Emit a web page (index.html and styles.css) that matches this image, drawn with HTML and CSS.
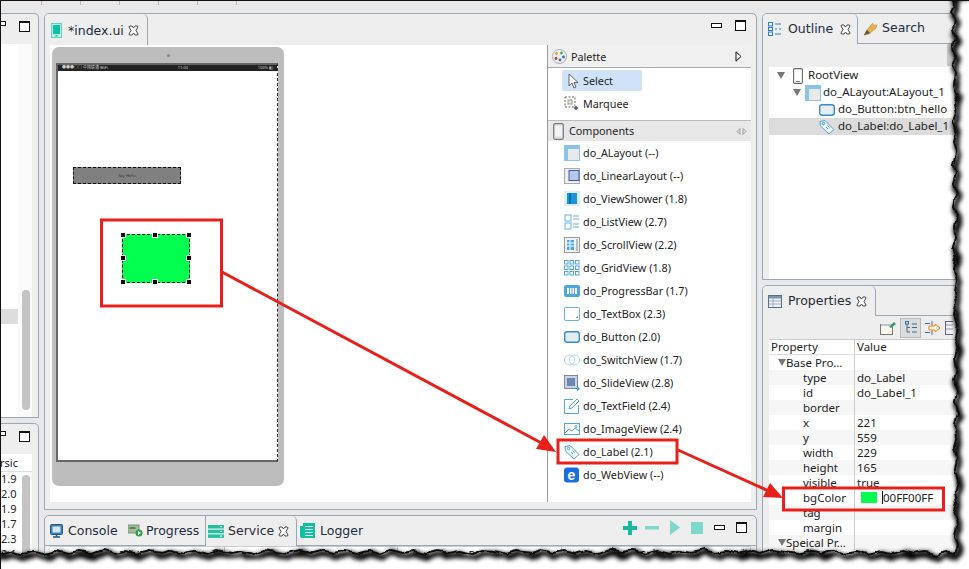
FILE: index.html
```html
<!DOCTYPE html>
<html lang="en">
<head>
  <meta charset="UTF-8">
  <title>index.ui</title>
  <link rel="stylesheet" href="styles.css">
</head>
<body>
<div class="shot">
  <div class="topstrip"><i></i><i></i><i></i><i></i><i></i><i></i></div>
  <div class="ide">

    <!-- left stub -->
    <div class="col">
      <section class="panel left-a">
        <div class="bar stub-bar"><span class="btn-min"></span><span class="btn-max"></span></div>
        <div class="left-body">
          <div class="left-white"><div class="left-sel"></div></div>
          <div class="left-gutter"><div class="left-thumb"></div></div>
        </div>
      </section>
      <section class="panel left-b">
        <div class="bar stub-bar"><span class="btn-min"></span><span class="btn-max"></span></div>
        <div class="left-table">
          <div class="left-head">rsic</div>
          <div class="left-rows">
            <div class="left-vals">
              <div>1.9</div><div>2.0</div><div>1.9</div><div>1.7</div><div>2.3</div><div>2.1</div>
            </div>
            <div class="left-thumb2"></div>
          </div>
        </div>
      </section>
    </div>

    <!-- center -->
    <div class="col">
      <section class="panel editor">
        <div class="bar editor-bar">
          <div class="tab tab-editor">
            <svg width="11" height="15" viewBox="0 0 11 15"><rect x=".5" y=".5" width="10" height="14" fill="#bfeee6" stroke="#62d0bf"/><rect x="2" y="2" width="7" height="9" fill="#0fbfa3"/><rect x="4.5" y="12" width="2" height="1.5" fill="#0fbfa3"/></svg>
            <span class="tab-title">*index.ui</span>
            <svg class="close" width="11" height="11" viewBox="0 0 11 11"><use href="#x-icon"/></svg>
          </div>
          <div class="bar-tools"><span class="btn-min"></span><span class="btn-max"></span></div>
        </div>
        <div class="editor-body">
          <div class="canvas">
            <div class="phone">
              <div class="phone-cam"></div>
              <div class="screen">
                <div class="statusbar"><span>●●●○○ 中国联通 WiFi</span><span>11:00</span><span>100% ▮▯</span></div>
                <div class="say-hello">Say Hello</div>
                <div class="green-box">
                  <b class="h h1"></b><b class="h h2"></b><b class="h h3"></b><b class="h h4"></b>
                  <b class="h h5"></b><b class="h h6"></b><b class="h h7"></b><b class="h h8"></b>
                </div>
              </div>
            </div>
          </div>
          <aside class="palette">
            <div class="pal-head">
              <svg width="15" height="15" viewBox="0 0 15 15"><circle cx="7.5" cy="7.5" r="7" fill="#eef0f4" stroke="#aab"/><circle cx="4.5" cy="4.5" r="1.4" fill="#e9a020"/><circle cx="9.5" cy="4" r="1.4" fill="#3bb54a"/><circle cx="11.5" cy="8" r="1.4" fill="#2f6fd0"/><circle cx="8" cy="11" r="1.4" fill="#2f6fd0"/><circle cx="4" cy="9.5" r="1.4" fill="#d8352a"/></svg>
              <span>Palette</span>
              <svg class="pal-arrow" width="7" height="11" viewBox="0 0 7 11"><path d="M1 .8 6 5.5 1 10.2Z" fill="#fff" stroke="#111"/></svg>
            </div>
            <div class="pal-tools">
              <div class="tool selected">
                <svg width="16" height="16" viewBox="-4 0 16 16"><path d="M1 1v12l3-3 2 5 2-1-2-4.500h4Z" fill="#f6f6f2" stroke="#555" stroke-width=".9"/></svg>
                <span>Select</span>
              </div>
              <div class="tool">
                <svg width="16" height="16" viewBox="0 0 16 16"><rect x="1" y="1" width="10" height="10" fill="none" stroke="#667" stroke-dasharray="2 1.500"/><rect x="4" y="4" width="4" height="4" fill="#f2ead2" stroke="#998"/><path d="M12 10v4M10 12h4" stroke="#222"/></svg>
                <span>Marquee</span>
              </div>
            </div>
            <div class="comp-head">
              <svg width="11" height="17" viewBox="0 0 11 17"><rect x=".7" y=".7" width="9.600" height="15.600" rx="1.500" fill="#e4e4e4" stroke="#777" stroke-width="1.200"/><rect x="2" y="3" width="7" height="10" fill="#f3f3f3"/></svg>
              <span>Components</span>
              <svg class="comp-arrows" width="11" height="7" viewBox="0 0 11 7"><path d="M4 .5 1 3.500 4 6.500ZM7 .5l3 3-3 3Z" fill="#ddd" stroke="#888" stroke-width=".7"/></svg>
            </div>
            <ul class="comp-list">
              <li><svg viewBox="0 0 16 16"><rect width="16" height="16" fill="#8cc4e6"/><rect x="4" y="4" width="11" height="11" fill="#e9e9e9"/></svg><span>do_ALayout (--)</span></li>
              <li><svg viewBox="0 0 16 16"><rect x=".5" y=".5" width="15" height="15" fill="#eee" stroke="#aaa"/><rect x="5" y="2.500" width="10" height="10" fill="#b8c8ea" stroke="#3a5cae"/></svg><span>do_LinearLayout (--)</span></li>
              <li><svg viewBox="0 0 16 16"><rect width="16" height="15" fill="#d8eefa"/><rect x="3" y="2" width="10" height="11" fill="#1b95d8"/><rect x="5" y="2" width="2" height="11" fill="#0d6fb5"/></svg><span>do_ViewShower (1.8)</span></li>
              <li><svg viewBox="0 0 16 16" fill="none" stroke="#63b5e5"><rect x="1" y="1" width="6" height="6"/><rect x="1" y="9" width="6" height="6"/><path d="M9 2h6M9 5h6M9 10h6M9 13h6"/></svg><span>do_ListView (2.7)</span></li>
              <li><svg viewBox="0 0 16 16"><rect x=".5" y=".5" width="15" height="15" fill="#eef5fa" stroke="#999"/><path d="M3 3h7v10H3Z" fill="#4fa6dc"/><path d="M3 6h7M3 9h7M6 3v10" stroke="#fff"/><rect x="12" y="2" width="2" height="12" fill="#bbb"/></svg><span>do_ScrollView (2.2)</span></li>
              <li><svg viewBox="0 0 16 16" fill="none" stroke="#4fa6dc"><rect x=".5" y=".5" width="3.500" height="3.500"/><rect x="6" y=".5" width="3.500" height="3.500"/><rect x="11.500" y=".5" width="3.500" height="3.500"/><rect x=".5" y="6" width="3.500" height="3.500"/><rect x="6" y="6" width="3.500" height="3.500"/><rect x="11.500" y="6" width="3.500" height="3.500"/><rect x=".5" y="11.500" width="3.500" height="3.500"/><rect x="6" y="11.500" width="3.500" height="3.500"/><rect x="11.500" y="11.500" width="3.500" height="3.500"/></svg><span>do_GridView (1.8)</span></li>
              <li><svg viewBox="0 0 16 16"><rect y="2" width="16" height="12" rx="2" fill="#4fa6dc"/><rect x="3" y="5" width="10" height="6" fill="#fff"/><path d="M5.500 5v6M8 5v6M10.500 5v6" stroke="#4fa6dc"/></svg><span>do_ProgressBar (1.7)</span></li>
              <li><svg viewBox="0 0 16 16"><rect x=".5" y="1.500" width="15" height="13" rx="1.500" fill="#fff" stroke="#63b5e5"/><path d="M12 12l2-2v2Z" fill="#777"/></svg><span>do_TextBox (2.3)</span></li>
              <li><svg viewBox="0 0 16 16"><rect x=".7" y="2.700" width="14.600" height="10.600" rx="2.500" fill="#e7edf2" stroke="#2f8fd0" stroke-width="1.400"/></svg><span>do_Button (2.0)</span></li>
              <li><svg viewBox="0 0 16 16" fill="none" stroke="#a8d6f0"><circle cx="5.500" cy="8" r="5"/><circle cx="10.500" cy="8" r="5"/></svg><span>do_SwitchView (1.7)</span></li>
              <li><svg viewBox="0 0 16 16"><rect x=".5" y=".5" width="13" height="13" fill="#c6d4e4" stroke="#889"/><rect x="3" y="3" width="8" height="8" fill="#6d87b5"/><path d="M8 13h5v-2l3 3-3 2v-2H8Z" fill="#3b98d8"/></svg><span>do_SlideView (2.8)</span></li>
              <li><svg viewBox="0 0 16 16" fill="none" stroke="#4fa6dc"><path d="M9 1.500H.5v14h14V7"/><path d="M5 11l1-3 7-7 2 2-7 7Z" fill="#fff"/></svg><span>do_TextField (2.4)</span></li>
              <li><svg viewBox="0 0 16 16" fill="none" stroke="#4fa6dc"><rect x=".5" y="2.500" width="15" height="11"/><path d="M1 12l4-4 3 2 3-3 4 3"/><circle cx="12" cy="5.500" r="1"/></svg><span>do_ImageView (2.4)</span></li>
              <li><svg viewBox="0 0 16 16" fill="none" stroke="#4fa6dc"><path d="M1 2.500 6 1.500 15 10.500 10 15 1.500 7Z" fill="#eef7fc"/><circle cx="4.500" cy="4.500" r="1.200"/><path d="M7 8l2 2M8.500 6.500l2 2"/></svg><span>do_Label (2.1)</span></li>
              <li><svg viewBox="0 0 16 16"><rect width="15" height="15" y=".5" rx="3" fill="#1a6fe0"/><text class="ie" x="7.500" y="12.500">e</text></svg><span>do_WebView (--)</span></li>
            </ul>
          </aside>
        </div>
      </section>

      <section class="panel bottom">
        <div class="bar bottom-bar">
          <div class="plain-tab">
            <svg width="13" height="14" viewBox="0 0 13 14"><rect x=".5" y=".5" width="12" height="10" rx="1" fill="#3d7fb5" stroke="#1e5a8c"/><rect x="2.500" y="2.500" width="8" height="6" fill="#d7e6f2"/><path d="M3 13h7M6.500 11v2" stroke="#1e5a8c" stroke-width="1.500"/></svg>
            <span>Console</span>
          </div>
          <div class="plain-tab">
            <svg width="15" height="13" viewBox="0 0 15 13"><rect y="1" width="11" height="8" fill="#a8b8a0" stroke="#7f8f7a"/><rect x="1.500" y="3" width="6" height="2" fill="#3f9a4a"/><circle cx="11" cy="9" r="3.500" fill="#2f9e44"/><path d="M10 7l3 2-3 2Z" fill="#fff"/></svg>
            <span>Progress</span>
          </div>
          <div class="tab tab-service">
            <svg width="16" height="13" viewBox="0 0 16 13"><rect width="16" height="3.500" fill="#27c0a3"/><rect y="4.700" width="16" height="3.500" fill="#27c0a3"/><rect y="9.400" width="16" height="3.500" fill="#27c0a3"/><path d="M12 1.700h2M12 6.400h2M12 11.100h2" stroke="#fff"/></svg>
            <span class="tab-title">Service</span>
            <svg class="close" width="11" height="11" viewBox="0 0 11 11"><use href="#x-icon"/></svg>
          </div>
          <div class="plain-tab">
            <svg width="15" height="15" viewBox="0 0 15 15"><path d="M3 0h12v15H2q-2 0-2-2V3h3Z" fill="#12bfa0"/><path d="M5 3.500h8M5 6.500h8M5 9.500h8M5 12.500h8" stroke="#e4f8f3"/></svg>
            <span>Logger</span>
          </div>
          <div class="bar-tools run-tools">
            <svg class="run-plus" width="14" height="14" viewBox="0 0 14 14"><path d="M5 0h4v5h5v4H9v5H5V9H0V5h5Z" fill="#17b89d"/></svg>
            <svg width="14" height="14" viewBox="0 0 14 14"><rect y="5" width="14" height="3.500" fill="#7dd9cb"/></svg>
            <svg class="run-play" width="11" height="15" viewBox="0 0 11 15"><path d="M0 0 10 7.500 0 15Z" fill="#7dd9cb"/></svg>
            <svg width="12" height="12" viewBox="0 0 12 12"><rect width="12" height="12" fill="#7dd9cb"/></svg>
            <span class="btn-min"></span><span class="btn-max"></span>
          </div>
        </div>
        <div class="service-table">
          <span>Project</span><span>IP</span><span>Port</span><span>Status</span>
        </div>
      </section>
    </div>

    <!-- right -->
    <div class="col">
      <section class="panel outline">
        <div class="bar right-bar">
          <div class="tab tab-outline">
            <svg width="14" height="14" viewBox="0 0 14 14" fill="none" stroke="#2f7fc0"><rect x=".5" y=".5" width="4" height="3.500"/><rect x=".5" y="5.500" width="4" height="3"/><rect x=".5" y="10" width="4" height="3.500"/><path d="M7 2h6M7 7h2M11 7h2M7 12h6"/></svg>
            <span class="tab-title">Outline</span>
            <svg class="close" width="11" height="11" viewBox="0 0 11 11"><use href="#x-icon"/></svg>
          </div>
          <div class="plain-tab search-tab">
            <svg width="16" height="15" viewBox="0 0 16 15"><path d="M1 14 4 9l6-7 4 1-1 4-7 6Z" fill="#e9b04e" stroke="#b5802b" stroke-width=".6"/><path d="M1 14 4 9l3 3Z" fill="#555"/><path d="M10 2l4 1" stroke="#eee" stroke-width="2"/></svg>
            <span>Search</span>
          </div>
        </div>
        <div class="outline-tools"><span class="scroll-stub"></span></div>
        <div class="tree">
          <div class="node lv0">
            <i class="twist"></i>
            <svg width="10" height="16" viewBox="0 0 10 16"><rect x=".6" y=".6" width="8.800" height="14.800" rx="1.200" fill="#fff" stroke="#666" stroke-width="1.100"/><rect x="3" y="13" width="4" height="1" fill="#888"/></svg>
            <span>RootView</span>
          </div>
          <div class="node lv1">
            <i class="twist"></i>
            <svg width="16" height="16" viewBox="0 0 16 16"><rect width="16" height="16" fill="#8cc4e6"/><rect x="4" y="4" width="11" height="11" fill="#e9e9e9"/></svg>
            <span>do_ALayout:ALayout_1</span>
          </div>
          <div class="node lv2">
            <svg width="16" height="16" viewBox="0 0 16 16"><rect x=".7" y="2.700" width="14.600" height="10.600" rx="2.500" fill="#e7edf2" stroke="#2f8fd0" stroke-width="1.400"/></svg>
            <span>do_Button:btn_hello</span>
          </div>
          <div class="node lv2 node-sel">
            <svg width="16" height="16" viewBox="0 0 16 16" fill="none" stroke="#4fa6dc"><path d="M1 2.500 6 1.500 15 10.500 10 15 1.500 7Z" fill="#eef7fc"/><circle cx="4.500" cy="4.500" r="1.200"/><path d="M7 8l2 2M8.500 6.500l2 2"/></svg>
            <span>do_Label:do_Label_1</span>
          </div>
        </div>
      </section>

      <section class="panel props">
        <div class="bar right-bar props-bar">
          <div class="tab tab-props">
            <svg width="14" height="13" viewBox="0 0 14 13"><rect x=".5" y=".5" width="13" height="12" fill="#eef2f6" stroke="#5a6f85"/><rect x="1" y="1" width="12" height="2.500" fill="#7f95ab"/><path d="M1 6h12M1 9h12M5 3v9" stroke="#9fb0c0"/></svg>
            <span class="tab-title">Properties</span>
            <svg class="close" width="11" height="11" viewBox="0 0 11 11"><use href="#x-icon"/></svg>
          </div>
        </div>
        <div class="props-tools">
          <svg width="16" height="14" viewBox="0 0 16 14"><rect x=".5" y="3.500" width="12" height="10" fill="#fdf8ec" stroke="#777"/><rect x="1" y="3" width="12" height="2" fill="#b9c4cf"/><path d="M9 6l5-5 2 2-5 4Z" fill="#2f9e6a"/></svg>
          <span class="tool-on"><svg width="12" height="13" viewBox="0 0 12 13" fill="none" stroke="#3a6f9a"><rect x=".5" y=".5" width="3" height="2.500"/><path d="M2 3v8h3M2 6.500h3M7 3h5M7 6.500h5M7 11h5"/></svg></span>
          <svg width="16" height="14" viewBox="0 0 16 14"><path d="M0 2.500h5M0 11.500h5M7 0v5M7 9v5" stroke="#3a6f9a"/><path d="M4 5h6V3l5 4-5 4V9H4Z" fill="#fdf3df" stroke="#e08a1e"/></svg>
          <svg width="8" height="14" viewBox="0 0 8 14"><rect x=".5" y=".5" width="12" height="13" fill="#eef2f6" stroke="#667"/><path d="M1 4h7M1 8h7" stroke="#99a"/></svg>
        </div>
        <div class="prop-table">
          <div class="prop-row prop-head"><span>Property</span><span>Value</span></div>
          <div class="prop-row group"><span><i class="twist"></i>Base Pro…</span><span></span></div>
          <div class="prop-row alt"><span>type</span><span>do_Label</span></div>
          <div class="prop-row"><span>id</span><span>do_Label_1</span></div>
          <div class="prop-row alt"><span>border</span><span></span></div>
          <div class="prop-row"><span>x</span><span>221</span></div>
          <div class="prop-row alt"><span>y</span><span>559</span></div>
          <div class="prop-row"><span>width</span><span>229</span></div>
          <div class="prop-row alt"><span>height</span><span>165</span></div>
          <div class="prop-row"><span>visible</span><span>true</span></div>
          <div class="prop-row editing"><span>bgColor</span><span class="color-cell"><b class="swatch"></b><em class="caret">00FF00FF</em></span></div>
          <div class="prop-row alt"><span>tag</span><span></span></div>
          <div class="prop-row"><span>margin</span><span></span></div>
          <div class="prop-row group alt"><span><i class="twist"></i>Speical Pr…</span><span></span></div>
        </div>
      </section>
    </div>
  </div>

  <!-- callouts drawn on top of the screenshot -->
  <svg class="marks" width="969" height="569" viewBox="0 0 969 569">
    <defs>
      <filter id="rough" filterUnits="userSpaceOnUse" x="-20" y="-20" width="1010" height="610"><feTurbulence type="fractalNoise" baseFrequency=".07" numOctaves="2" seed="4"/><feDisplacementMap in="SourceGraphic" scale="7" xChannelSelector="R" yChannelSelector="G"/></filter>
      <filter id="soft" filterUnits="userSpaceOnUse" x="-20" y="-20" width="1010" height="610"><feTurbulence type="fractalNoise" baseFrequency=".07" numOctaves="2" seed="4"/><feDisplacementMap in="SourceGraphic" scale="7" xChannelSelector="R" yChannelSelector="G"/><feGaussianBlur stdDeviation="2.200"/></filter>
      <g id="x-icon"><path d="M1.500 1 4 1 5.500 3 7 1 9.500 1 10 2 8 5.500 10 9 9.500 10 7 10 5.500 8 4 10 1.500 10 1 9 3 5.500 1 2Z" fill="#fff" stroke="#333" stroke-width=".9"/></g>
      <path id="tear" d="M955 -5 L956 8 953 14 957 22 955 31 958 40 955 48 957 58 954 67 958 76 956 87 959 95 956 106 958 116 955 124 958 134 956 145 959 155 956 166 958 176 955 186 958 197 956 208 959 217 956 228 958 240 955 250 958 261 956 272 959 283 957 294 959 305 956 316 959 327 957 338 960 349 957 360 959 371 956 382 959 393 957 404 960 415 957 426 959 438 956 449 959 460 957 472 960 483 957 494 959 505 956 516 959 527 957 538 960 548 956 556 948 554 938 557 927 554 916 556 905 553 893 556 882 554 870 557 858 553 846 555 835 553 823 556 811 553 799 556 787 554 775 552 763 556 751 553 740 556 728 553 717 555 705 552 694 555 682 553 671 556 659 553 648 556 636 553 624 555 612 552 601 556 589 553 578 556 566 553 555 555 543 552 532 555 520 553 508 556 497 553 485 552 474 556 462 553 451 555 439 553 428 556 416 553 405 555 393 552 382 556 370 553 359 556 347 553 336 555 324 552 313 555 301 553 289 556 278 554 266 552 255 556 243 553 232 555 220 552 209 556 197 553 186 555 174 552 163 555 151 553 140 556 128 553 117 555 105 552 94 556 82 554 70 556 58 553 47 556 35 554 24 556 12 554 4 556 -5 555 -5 580 980 580 980 -5Z"/>
    </defs>

    <rect class="red-box" x="101.500" y="220" width="120" height="86"/>
    <rect class="red-box" x="558" y="440" width="119" height="23"/>
    <rect class="red-box" x="783.500" y="488" width="160" height="22"/>
    <path class="red-line" d="M222 272 547 446"/>
    <path class="red-fill" d="M556 452 536 449 544 435Z"/>
    <path class="red-line" d="M678 450 773 493"/>
    <path class="red-fill" d="M783 498 763 497 770 483Z"/>

    <use href="#tear" class="tear-fill" transform="translate(-2 -2)"/>
    <use href="#tear" class="tear-shadow" transform="translate(0 1)"/>
    <use href="#tear" class="tear-edge" transform="translate(-2 -2)"/>
  </svg>
</div>
</body>
</html>
```

FILE: styles.css
```css
html, body { margin:0; padding:0; background:#fff; }
body { font-family:"Noto Sans", "Noto Sans CJK SC", sans-serif; color:#222; }

.shot { position:relative; width:969px; height:569px; overflow:hidden; background:#e8e8e8; border-top:1px solid #111; border-left:1px solid #111; box-sizing:border-box; }

.topstrip { height:12px; display:flex; gap:38px; padding-left:40px; }
.topstrip i { width:1px; height:4px; background:#bbb; }

.ide { display:grid; grid-template-columns:38px 713px 220px; column-gap:5px; height:556px; }
.col { display:flex; flex-direction:column; gap:5px; min-height:0; }

.panel { background:#eee; border:1px solid #98a8b8; border-radius:5px 5px 0 0; box-sizing:border-box; overflow:hidden; display:flex; flex-direction:column; }
.bar { display:flex; align-items:flex-start; flex:none; }
.bar-tools { margin-left:auto; display:flex; align-items:center; gap:13px; padding:6px 10px 0 0; }
.btn-min { display:block; width:9px; height:3px; border:1px solid #111; background:#fff; }
.btn-max { display:block; width:9px; height:8px; border:1px solid #111; border-top-width:2px; background:#fff; }

.tab { display:flex; align-items:center; gap:6px; border-right:1px solid #98a8b8; border-radius:0 5px 0 0; box-sizing:border-box; background:#eee; }
.tab-title, .plain-tab span { font-family:"DejaVu Sans", sans-serif; font-size:12.5px; line-height:18px; color:#1f2a3a; }
.close { margin-left:2px; }
.plain-tab { display:flex; align-items:center; gap:5px; }

/* left stub */
.left-a { height:405px; border-left:0; border-radius:0 5px 0 0; }
.left-b { flex:1; border-left:0; border-radius:0 5px 0 0; }
.stub-bar { height:30px; gap:13px; padding:7px 0 0 0; box-sizing:border-box; margin-left:-6px; }
.left-body { flex:1; display:flex; margin-right:6px; background:#f7f7f7; }
.left-white { width:17px; background:#fff; padding-top:265px; box-sizing:border-box; }
.left-sel { height:15px; background:#ddd; }
.left-gutter { flex:1; padding:246px 2px 0 4px; background:#fafafa; }
.left-thumb { height:120px; background:#c4c4c4; border-radius:4px; }
.left-table { flex:1; margin-right:6px; background:#fff; font-size:11px; }
.left-head { height:17px; line-height:17px; border-bottom:1px solid #ddd; margin-left:-1px; }
.left-rows { display:flex; justify-content:space-between; }
.left-vals { width:16px; overflow:hidden; direction:rtl; }
.left-vals div { height:15px; line-height:13px; direction:ltr; white-space:nowrap; }
.left-thumb2 { width:8px; height:90px; margin:3px 2px 0 0; background:#c4c4c4; border-radius:4px; }

/* editor */
.editor { height:497px; }
.editor-bar { height:31px; }
.tab-editor { width:103px; height:31px; padding:2px 0 0 6px; }
.tab-editor .close { margin-left:-2px; }
.editor-body { height:457px; margin:0 5px 0 5px; background:#fff; display:flex; }
.canvas { width:497px; padding:2px 0 0 2px; box-sizing:border-box; }
.phone { width:232px; height:439px; background:#bdbdbd; border-radius:7px; padding-top:7px; box-sizing:border-box; }
.phone-cam { width:3px; height:3px; margin:0 auto 6px; border-radius:50%; background:#888; }
.screen { width:222px; height:399px; margin-left:4px; box-sizing:border-box; background:#fff; border:solid #666; border-width:2px 0 2px 2px; border-right:1px dashed #222; }
.statusbar { display:flex; justify-content:space-between; height:6px; background:#222; color:#ccc; font-size:4px; line-height:6px; padding:0 4px; }
.say-hello { width:108px; height:17px; margin:96px 0 0 15px; box-sizing:border-box; background:#808080; border:1px dashed #111; font-size:4px; line-height:15px; text-align:center; color:#333; }
.green-box { position:relative; width:68px; height:49px; margin:50px 0 0 64px; box-sizing:border-box; background:#00ff4e; border:1px dashed #111; }
.h { position:absolute; width:4px; height:4px; background:#000; border:1px solid #fff; }
.h1 { left:-3px; top:-3px; } .h2 { left:29px; top:-3px; } .h3 { right:-3px; top:-3px; }
.h4 { left:-3px; top:20px; } .h5 { right:-3px; top:20px; }
.h6 { left:-3px; bottom:-3px; } .h7 { left:29px; bottom:-3px; } .h8 { right:-3px; bottom:-3px; }

/* palette */
.palette { width:204px; border-left:1px solid #999; font-size:10.8px; box-sizing:border-box; }
.pal-head { height:23px; display:flex; align-items:center; gap:4px; padding:0 9px 0 4px; background:#f0f0f0; border-bottom:1px solid #aaa; box-sizing:border-box; }
.pal-arrow { margin-left:auto; }
.pal-tools { height:53px; padding:2px 0 0 14px; box-sizing:border-box; border-bottom:1px solid #bbb; }
.tool { width:80px; height:21px; display:flex; align-items:center; gap:3px; padding-left:2px; box-sizing:border-box; margin-bottom:2px; }
.tool.selected { background:#cfe2f7; border-radius:2px; }
.comp-head { height:20px; display:flex; align-items:center; gap:5px; padding:0 4px 0 5px; background:#e8e8e8; box-sizing:border-box; }
.comp-head span { margin-top:-2px; }
.comp-arrows { margin-left:auto; }
.comp-list { list-style:none; margin:0; padding:0 0 0 16px; }
.comp-list li { height:23px; display:flex; align-items:center; gap:3px; white-space:nowrap; }
.comp-list svg { width:16px; height:16px; flex:none; }
.ie { font:bold 14px "Liberation Sans", sans-serif; fill:#fff; text-anchor:middle; }

/* bottom */
.bottom { flex:1; }
.bottom-bar { height:30px; align-items:center; padding-left:5px; border-bottom:1px solid #98a8b8; box-sizing:border-box; }
.bottom-bar .plain-tab:nth-child(1) { width:78px; gap:5px; }
.bottom-bar .plain-tab:nth-child(2) { width:77px; gap:3px; }
.tab-service { width:92px; height:30px; align-self:flex-start; padding-left:2px; border-left:1px solid #98a8b8; gap:4px; }
.tab-service .close { margin-left:0; }
.bottom-bar .plain-tab:nth-child(4) { margin-left:3px; }
.run-tools { padding:0 9px 6px 0; gap:11px; }
.run-plus { margin-right:-3px; }
.run-play { margin-right:-1px; }
.service-table { flex:1; margin:0 5px; background:#fff; font-size:11px; display:grid; grid-template-columns:175px 173px 164px 1fr; text-align:center; }
.service-table span { border-right:1px solid #ccc; border-top:1px solid #ccc; }

/* right */
.right-bar { height:30px; }
.outline { height:267px; }
.outline .right-bar, .props-bar { border-bottom:1px solid #98a8b8; box-sizing:border-box; }
.tab-outline { width:95px; height:30px; padding:0 0 0 5px; }
.tab-outline .close { margin-left:1px; }
.search-tab { height:28px; padding-left:5px; gap:3px; }
.outline-tools { height:23px; position:relative; }
.scroll-stub { position:absolute; left:184px; top:0; width:10px; height:22px; background:#c8c8c8; }
.tree { flex:1; margin-left:6px; background:#fff; font-size:11.5px; }
.node { height:17px; display:flex; align-items:center; gap:3px; white-space:nowrap; }
.node span { margin-top:-2px; }
.lv0 { padding-left:8px; gap:5px; }
.lv0 .twist { margin-right:3px; }
.lv1 { padding-left:24px; gap:2px; }
.lv2 { padding-left:50px; }
.node-sel { background:#dcdcdc; }
.twist { display:inline-block; width:0; height:0; border:4px solid transparent; border-top:7px solid #777; border-bottom:0; margin-right:2px; }

.props { flex:1; }
.tab-props { width:113px; height:30px; padding-left:5px; }
.tab-props .close { margin-left:-1px; }
.props-tools { height:23px; display:flex; align-items:center; gap:4px; justify-content:flex-end; padding-right:28px; }
.tool-on { display:flex; align-items:center; justify-content:center; width:21px; height:20px; background:#dcdcdc; border:1px solid #bbb; box-sizing:border-box; }
.prop-table { flex:1; margin-left:6px; background:#fff; font-size:11.5px; }
.prop-row { display:grid; grid-template-columns:86px 1fr; height:15px; line-height:15px; }
.prop-row span:first-child { padding-left:34px; border-right:1px solid #ccc; }
.prop-row span:last-child { padding-left:2px; }
.prop-row.alt { background:#f6f6f6; }
.prop-head { height:16px; line-height:13px; border-top:1px solid #ccc; border-bottom:1px solid #ddd; box-sizing:border-box; }
.prop-head span:first-child { padding-left:2px; }
.group span:first-child { padding-left:9px; }
.group .twist { margin-right:0; vertical-align:1px; }
.color-cell { display:flex; align-items:center; }
.swatch { width:16px; height:11px; margin-left:4px; background:#00ff4e; }
.caret { font-style:normal; margin-left:5px; border-left:1px solid #111; line-height:13px; }

/* overlay */
.marks { position:absolute; left:-1px; top:-1px; pointer-events:none; }
.red-box { fill:none; stroke:#e8201a; stroke-width:3; }
.red-line { fill:none; stroke:#e8201a; stroke-width:3; }
.red-fill { fill:#e8201a; }
.tear-fill { fill:#fff; filter:url(#rough); }
.tear-shadow { fill:none; stroke:#000; stroke-width:6; filter:url(#soft); }
.tear-edge { fill:none; stroke:#111; stroke-width:2; filter:url(#rough); }
```
